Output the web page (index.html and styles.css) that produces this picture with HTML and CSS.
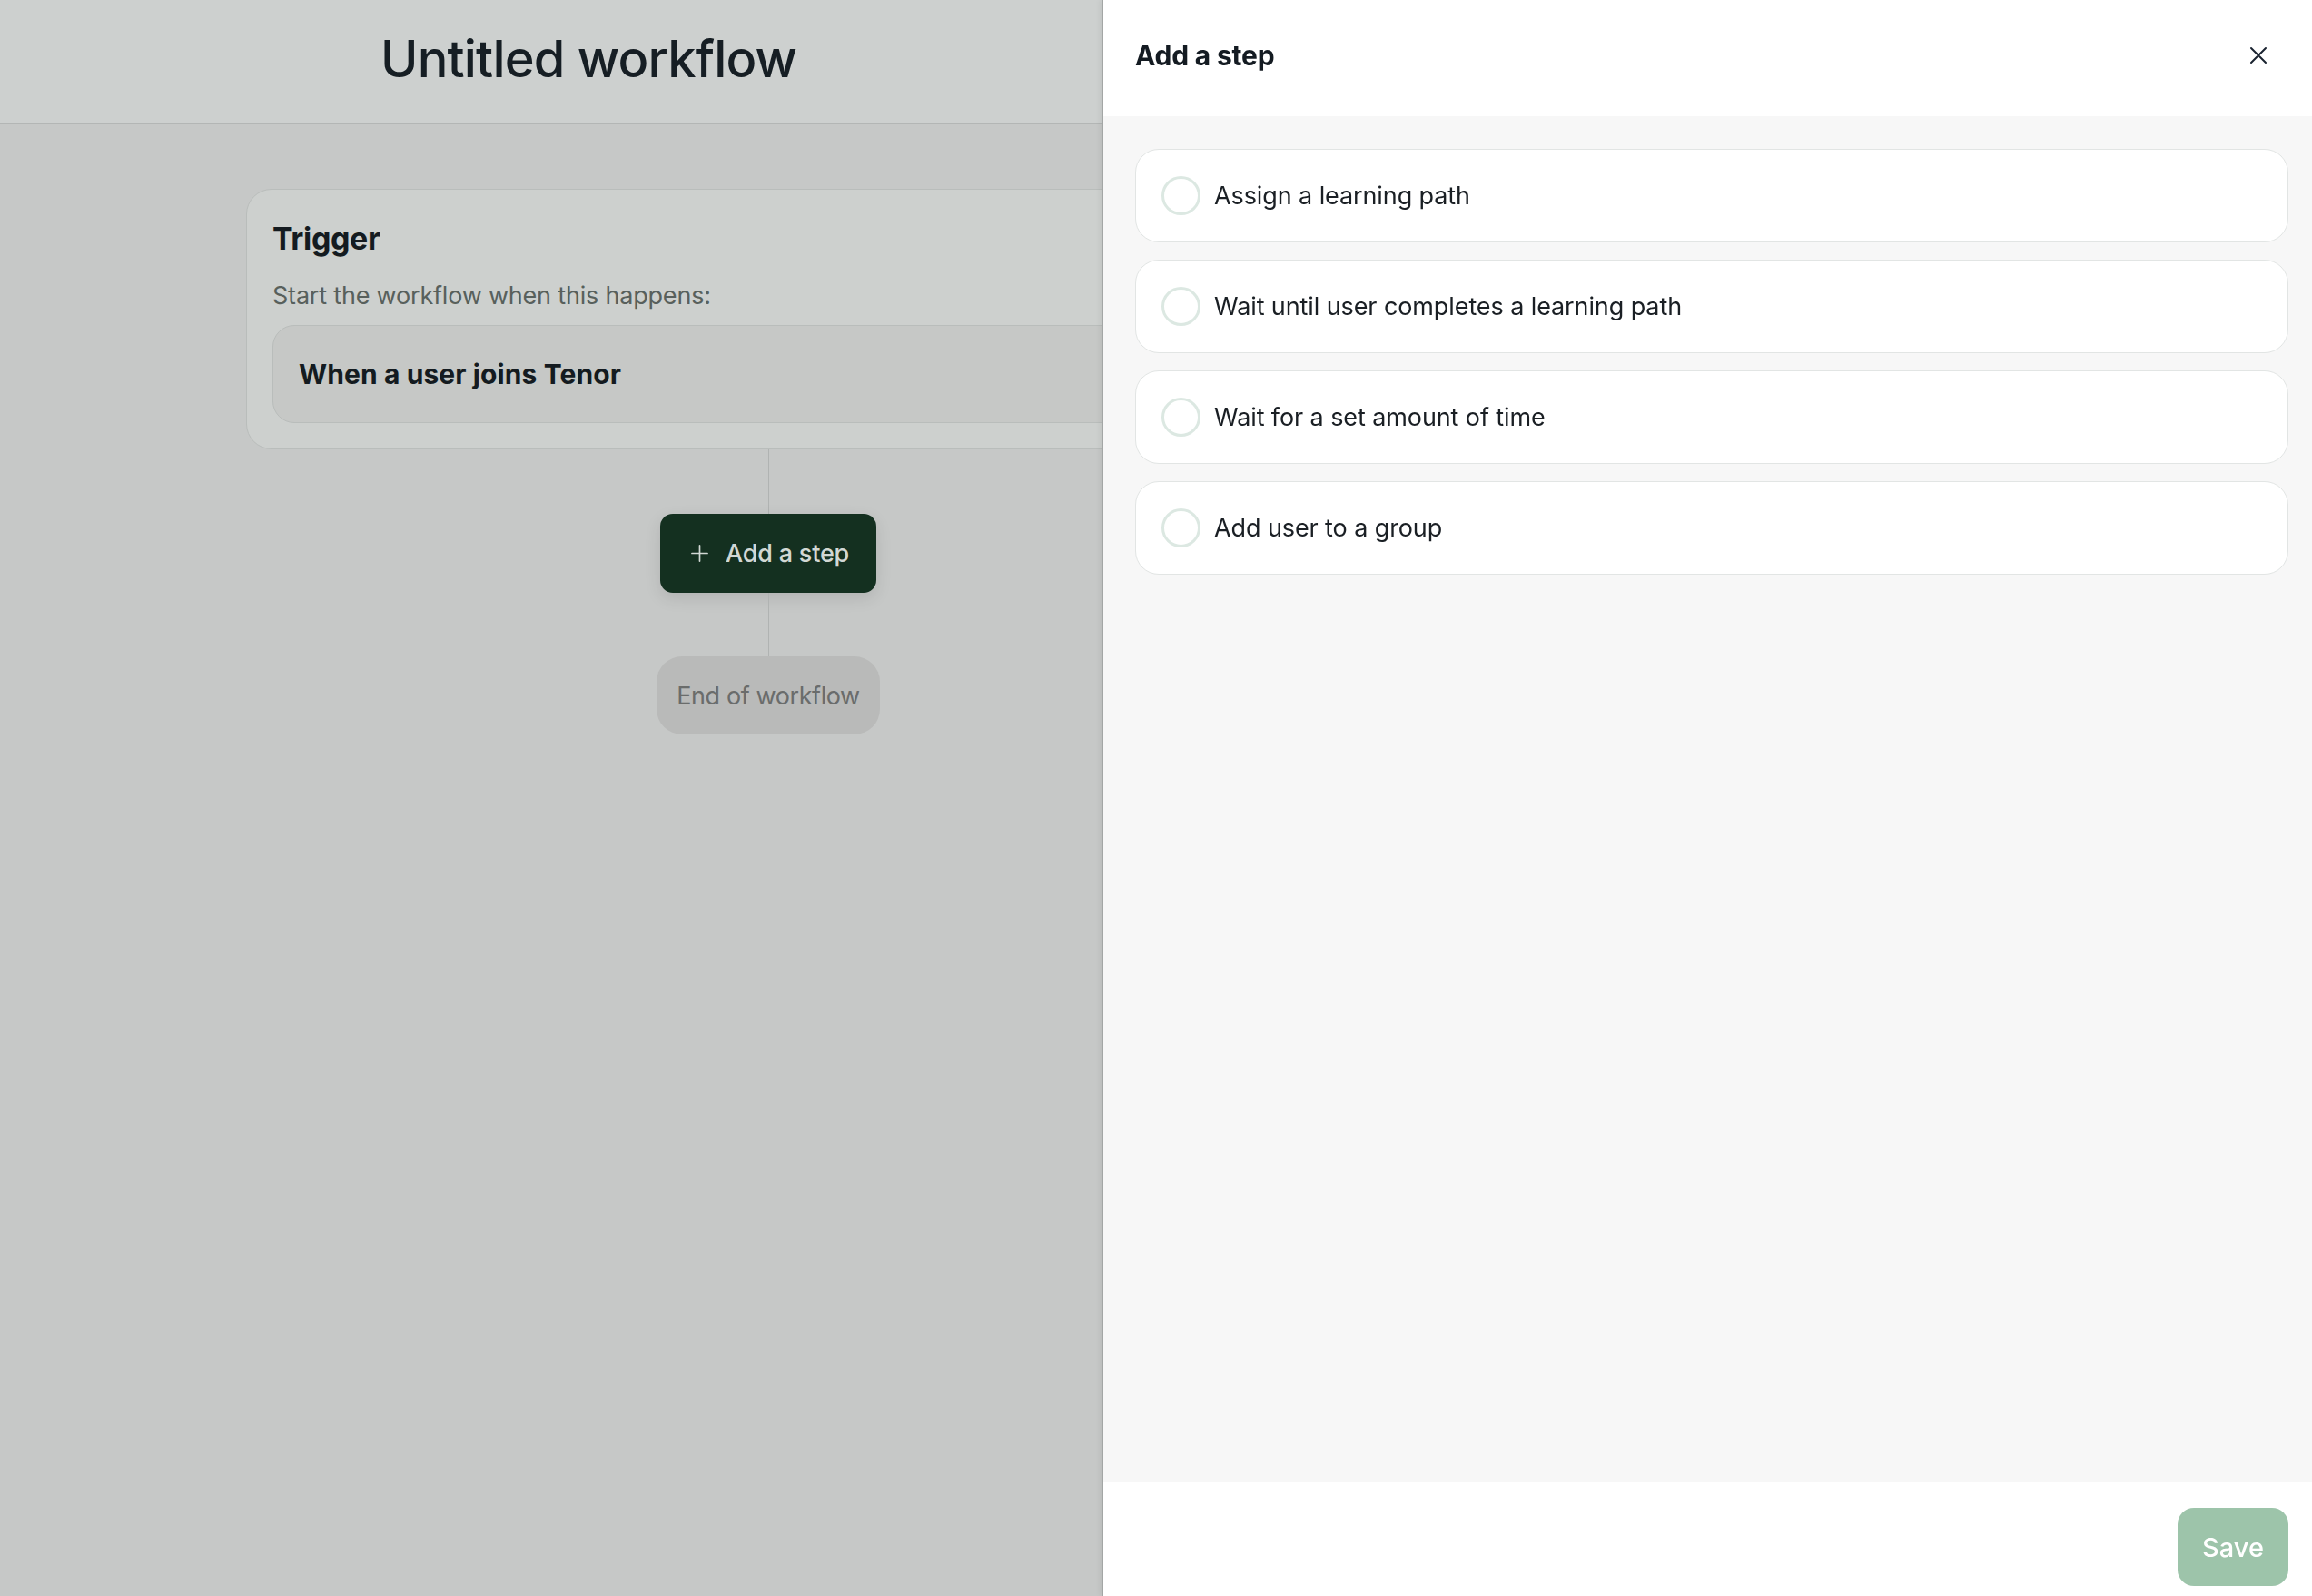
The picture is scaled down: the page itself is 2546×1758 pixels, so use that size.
FILE: index.html
```html
<!DOCTYPE html>
<html lang="en">
<head>
<meta charset="utf-8">
<title>Untitled workflow</title>
<link rel="stylesheet" href="styles.css">
</head>
<body>
<div class="page">
  <header class="topbar">
    <h1 class="title">Untitled workflow</h1>
  </header>
  <main class="canvas">
    <div class="flow">
      <section class="trigger-card">
        <h2 class="card-title">Trigger</h2>
        <p class="card-sub">Start the workflow when this happens:</p>
        <div class="trigger-box">When a user joins Tenor</div>
      </section>
      <div class="connector"></div>
      <button class="add-step" type="button">
        <svg class="plus" viewBox="0 0 20 20" width="19" height="19" aria-hidden="true"><path d="M10 1v18M1 10h18" stroke="currentColor" stroke-width="1.8" stroke-linecap="round" fill="none"/></svg>
        <span>Add a step</span>
      </button>
      <div class="connector short"></div>
      <div class="end-pill">End of workflow</div>
    </div>
  </main>
</div>

<aside class="drawer">
  <div class="drawer-head">
    <h2 class="drawer-title">Add a step</h2>
    <button class="close" type="button" aria-label="Close">
      <svg viewBox="0 0 20 20" width="20" height="20" aria-hidden="true"><path d="M2 2L18 18M18 2L2 18" stroke="currentColor" stroke-width="2" stroke-linecap="round" fill="none"/></svg>
    </button>
  </div>
  <div class="drawer-body">
    <label class="option"><span class="radio"></span><span class="opt-text">Assign a learning path</span></label>
    <label class="option"><span class="radio"></span><span class="opt-text">Wait until user completes a learning path</span></label>
    <label class="option"><span class="radio"></span><span class="opt-text">Wait for a set amount of time</span></label>
    <label class="option"><span class="radio"></span><span class="opt-text">Add user to a group</span></label>
  </div>
  <div class="drawer-foot">
    <button class="save" type="button">Save</button>
  </div>
</aside>
</body>
</html>
```

FILE: styles.css
```css
* { box-sizing: border-box; }
html, body { margin: 0; padding: 0; }
body {
  font-family: "Inter", "Liberation Sans", sans-serif;
  background: #c6c8c7;
  color: #161e24;
  width: 2546px;
  height: 1758px;
  overflow: hidden;
}
button { font-family: inherit; border: 0; cursor: pointer; }

.page { height: 1758px; display: flex; flex-direction: column; }

.topbar {
  height: 137px;
  background: #cdd0cf;
  border-bottom: 1px solid #b3b6b5;
  display: flex;
  align-items: center;
  padding: 0 0 7px 419px;
}
.title {
  margin: 0;
  font-size: 56px;
  font-weight: 500;
  letter-spacing: -0.8px;
  color: #161e24;
  line-height: 1;
}

.canvas { flex: 1; padding: 71px 0 0 271px; }
.flow { width: 1150px; display: flex; flex-direction: column; align-items: center; }

.trigger-card {
  align-self: stretch;
  background: #cdd0ce;
  border: 1.5px solid #b9bdbb;
  border-radius: 28px;
  padding: 33px 28px 28px 28px;
}
.card-title {
  margin: 0;
  font-size: 34px;
  font-weight: 700;
  letter-spacing: -0.4px;
  line-height: 41px;
  color: #141b20;
}
.card-sub {
  margin: 26px 0 16px;
  font-size: 27px;
  line-height: 33px;
  letter-spacing: -0.2px;
  color: #58605c;
}
.trigger-box {
  height: 108px;
  background: #c6c8c6;
  border: 1.5px solid #b9bdbb;
  border-radius: 24px;
  padding: 0 28px;
  display: flex;
  align-items: center;
  font-size: 30px;
  font-weight: 700;
  letter-spacing: 0.1px;
  color: #141b20;
}

.connector { width: 1px; height: 71px; background: #b0b3b2; }
.connector.short { height: 70px; }

.add-step {
  height: 87px;
  padding: 0 30px 0 34px;
  display: flex;
  align-items: center;
  gap: 19px;
  background: #143020;
  color: #d2d8d4;
  border-radius: 14px;
  font-size: 27px;
  font-weight: 500;
  letter-spacing: -0.2px;
  box-shadow: 0 6px 18px rgba(0, 0, 0, 0.10);
}
.plus { display: block; }

.end-pill {
  height: 86px;
  padding: 0 22px;
  display: flex;
  align-items: center;
  background: #b9bab9;
  border-radius: 28px;
  font-size: 27px;
  letter-spacing: -0.4px;
  color: #6a6c6b;
}

/* Drawer overlay */
.drawer {
  position: fixed;
  top: 0;
  right: 0;
  bottom: 0;
  width: 1332px;
  background: #ffffff;
  border-left: 1px solid #a3a6a5;
  box-shadow: -2px 0 6px rgba(0, 0, 0, 0.08);
  display: flex;
  flex-direction: column;
}
.drawer-head {
  height: 128px;
  flex: none;
  display: flex;
  align-items: center;
  justify-content: space-between;
  padding: 0 49px 6px 35px;
}
.drawer-title {
  margin: 0;
  font-size: 30px;
  font-weight: 700;
  letter-spacing: -0.2px;
  color: #141b22;
}
.close {
  background: transparent;
  padding: 0;
  width: 20px;
  height: 20px;
  color: #1a2330;
  display: flex;
}

.drawer-body {
  flex: 1;
  background: #f7f7f7;
  padding: 36px 26px 0 35px;
  display: flex;
  flex-direction: column;
  gap: 19px;
}
.option {
  height: 103px;
  background: #ffffff;
  border: 1.5px solid #e2e5e4;
  border-radius: 26px;
  display: flex;
  align-items: center;
  padding-left: 28px;
  gap: 15px;
}
.radio {
  width: 43px;
  height: 43px;
  border: 3px solid #dce8e2;
  border-radius: 50%;
  flex: none;
}
.opt-text {
  font-size: 27px;
  letter-spacing: -0.1px;
  color: #1a1f24;
}

.drawer-foot {
  height: 126px;
  flex: none;
  display: flex;
  justify-content: flex-end;
  align-items: flex-start;
  padding: 29px 26px 0;
}
.save {
  width: 122px;
  height: 86px;
  border-radius: 18px;
  background: #9dc4aa;
  color: #ffffff;
  font-size: 29px;
  font-weight: 500;
}
```
